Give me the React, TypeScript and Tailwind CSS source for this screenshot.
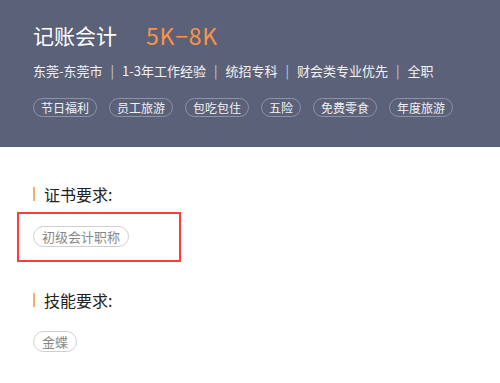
const benefits = ['节日福利', '员工旅游', '包吃包住', '五险', '免费零食', '年度旅游'];
const infos = ['东莞-东莞市', '1-3年工作经验', '统招专科', '财会类专业优先', '全职'];

function SectionTitle({ text }: { text: string }) {
  return (
    <div className="flex items-center h-[24px]">
      <span className="w-[2px] h-[14px] bg-[#f6ad66]" />
      <span className="ml-[9px] text-[16px] leading-[24px] text-[#222]">{text}</span>
    </div>
  );
}

function Tag({ text }: { text: string }) {
  return (
    <span className="inline-flex items-center h-[21px] px-[8px] rounded-full border border-[#cfcfcf] text-[13px] leading-[19px] text-[#888]">
      {text}
    </span>
  );
}

export default function App() {
  return (
    <div
      className="w-[500px] h-[383px] bg-white overflow-hidden"
      style={{ fontFamily: '"Noto Sans CJK SC", "Noto Sans", sans-serif' }}
    >
      <div className="h-[147px] bg-[#5b6179] px-[33px] pt-[20px]">
        <div className="flex items-center h-[30px]">
          <span className="text-[21px] leading-[30px] text-white">记账会计</span>
          <span className="ml-[29px] text-[23px] leading-[30px] tracking-[0.8px] text-[#f7934b]">5K−8K</span>
        </div>
        <div className="mt-[11px] flex items-center h-[20px] text-[13px] leading-[20px] text-[#f2f2f2]">
          {infos.map((t, i) => (
            <span key={t} className="flex items-center">
              {i > 0 && <span className="mx-[8px] text-[#c9ccd6]">|</span>}
              <span>{t}</span>
            </span>
          ))}
        </div>
        <div className="mt-[17px] flex gap-[12px]">
          {benefits.map((b) => (
            <span
              key={b}
              className="inline-flex items-center h-[19px] px-[7px] rounded-full border border-[#8d92a5] text-[12px] leading-[17px] text-[#f2f2f2]"
            >
              {b}
            </span>
          ))}
        </div>
      </div>

      <div className="px-[33px] pt-[35px]">
        <SectionTitle text="证书要求:" />
        <div className="mt-[6px] -ml-[16px] w-[164px] h-[50px] border-2 border-[#ff3b3b] pl-[14px] pt-[9px]">
          <Tag text="初级会计职称" />
        </div>
        <div className="mt-[26px]">
          <SectionTitle text="技能要求:" />
        </div>
        <div className="mt-[16px]">
          <Tag text="金蝶" />
        </div>
      </div>
    </div>
  );
}
